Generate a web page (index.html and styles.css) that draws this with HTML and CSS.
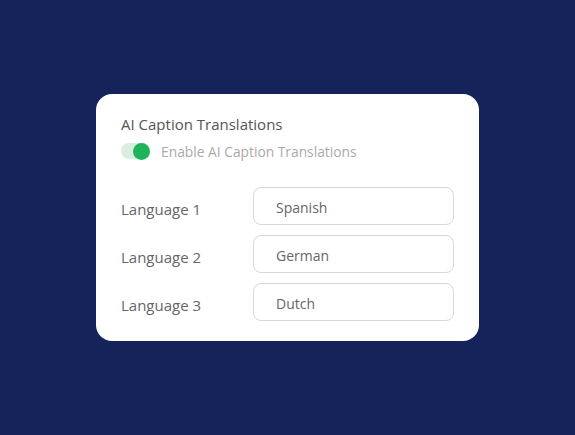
FILE: index.html
```html
<!DOCTYPE html>
<html>
<head>
<meta charset="utf-8">
<link rel="stylesheet" href="styles.css">
</head>
<body>
<div class="page">
  <div class="card">
    <div class="title">AI Caption Translations</div>
    <div class="toggle-row">
      <span class="toggle"><span class="knob"></span></span>
      <span class="toggle-label">Enable AI Caption Translations</span>
    </div>
    <div class="rows">
      <div class="row"><span class="label">Language 1</span><div class="field">Spanish</div></div>
      <div class="row"><span class="label">Language 2</span><div class="field">German</div></div>
      <div class="row"><span class="label">Language 3</span><div class="field">Dutch</div></div>
    </div>
  </div>
</div>
</body>
</html>
```
FILE: styles.css
```css
html, body { margin: 0; padding: 0; }
body {
  background: #16225a;
  font-family: "Open Sans", "Noto Sans", sans-serif;
  width: 575px;
  height: 435px;
}
.page {
  display: flex;
  padding: 94px 0 0 96px;
}
.card {
  box-sizing: border-box;
  width: 383px;
  height: 247px;
  background: #fff;
  border-radius: 16px;
  padding: 20px 25px 20px 25px;
  display: flex;
  flex-direction: column;
}
.title {
  font-size: 15px;
  line-height: 20px;
  color: #555;
  font-weight: 500;
}
.toggle-row {
  display: flex;
  align-items: center;
  margin-top: 7px;
  height: 22px;
}
.toggle {
  position: relative;
  width: 29px;
  height: 16px;
  border-radius: 8px;
  background: #d9eee0;
  display: block;
}
.knob {
  position: absolute;
  right: 0;
  top: -0.5px;
  width: 17px;
  height: 17px;
  border-radius: 50%;
  background: #1fb35a;
}
.toggle-label {
  margin-left: 11px;
  font-size: 13.8px;
  color: #aaa;
  font-weight: 500;
}
.rows {
  margin-top: 26px;
  display: flex;
  flex-direction: column;
  gap: 10px;
}
.row {
  display: flex;
  align-items: center;
}
.label {
  width: 132px;
  font-size: 15px;
  color: #666;
  font-weight: 500;
  margin-top: 6px;
}
.field {
  box-sizing: border-box;
  flex: 1;
  height: 38px;
  border: 1px solid #d8d8d8;
  border-radius: 8px;
  padding-left: 22px;
  padding-top: 2px;
  display: flex;
  align-items: center;
  font-size: 14px;
  color: #666;
  font-weight: 500;
}
```
